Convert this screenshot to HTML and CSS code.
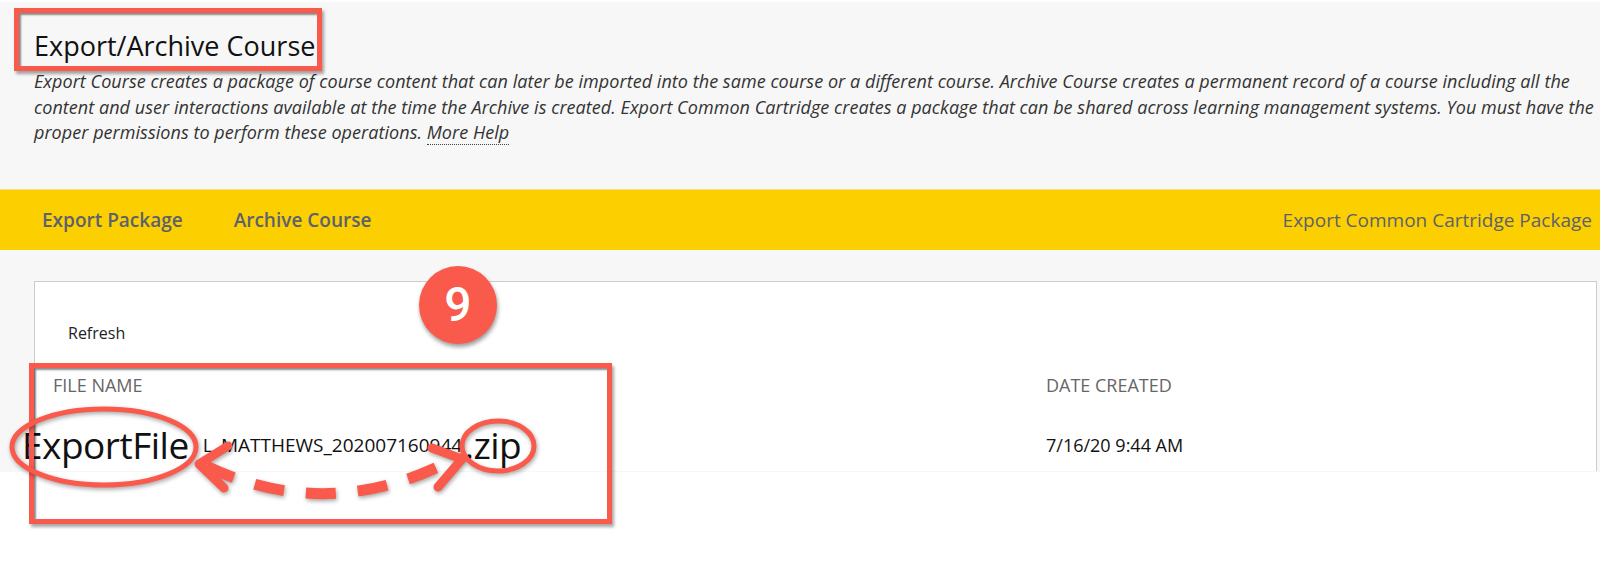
FILE: index.html
```html
<!DOCTYPE html>
<html lang="en">
<head>
<meta charset="utf-8">
<title>Export/Archive Course</title>
<link rel="stylesheet" href="styles.css">
</head>
<body>
<div class="screen">
  <header class="page-head">
    <h1 class="title">Export/Archive Course</h1>
    <p class="desc">Export Course creates a package of course content that can later be imported into the same course or a different course. Archive Course creates a permanent record of a course including all the<br>content and user interactions available at the time the Archive is created. Export Common Cartridge creates a package that can be shared across learning management systems. You must have the<br>proper permissions to perform these operations. <a class="help" href="#">More Help</a></p>
    <div class="mark-title"></div>
  </header>

  <nav class="tabs">
    <a class="tab strong" href="#">Export Package</a>
    <a class="tab strong" href="#">Archive Course</a>
    <a class="tab right" href="#">Export Common Cartridge Package</a>
  </nav>

  <section class="box">
    <div class="refresh">Refresh</div>
    <div class="table">
      <div class="th">FILE NAME</div>
      <div class="th">DATE CREATED</div>
      <div class="td name"><span class="big first">ExportFile</span><span class="small">L_MATTHEWS_202007160944</span><span class="big ext">.zip</span></div>
      <div class="td">7/16/20 9:44 AM</div>
    </div>
    <div class="badge">9</div>
    <div class="mark-table"></div>
  </section>

  <svg class="arrows" width="640" height="210" viewBox="0 0 640 210" xmlns="http://www.w3.org/2000/svg">
    <g fill="none" stroke="#fa5a4b">
      <ellipse cx="104" cy="87" rx="92" ry="38" stroke-width="5"/>
      <ellipse cx="498" cy="86" rx="36" ry="25" stroke-width="5"/>
      <path d="M206 106 Q330 165 456 98" stroke-width="11" stroke-dasharray="30 22"/>
      <polyline points="228,86 199,104 224,128" stroke-width="9" stroke-linecap="round" stroke-linejoin="round"/>
      <polyline points="432,88 462,99 438,127" stroke-width="9" stroke-linecap="round" stroke-linejoin="round"/>
    </g>
  </svg>
</div>
</body>
</html>
```

FILE: styles.css
```css
* { box-sizing: border-box; }

html, body {
  margin: 0;
  padding: 0;
  background: #ffffff;
}

body {
  font-family: "Open Sans", "DejaVu Sans", sans-serif;
  color: #222;
  width: 1600px;
  height: 570px;
  overflow: hidden;
}

.screen {
  position: relative;
  height: 472px;
  background: #f7f7f7;
  border-top: 2px solid #ffffff;
}

.page-head {
  position: relative;
  padding: 28px 0 0 34px;
}

.title {
  margin: 0;
  font-size: 27px;
  font-weight: 400;
  line-height: 32px;
  color: #111;
}

.desc {
  margin: 7px 0 0 0;
  font-size: 18px;
  font-style: italic;
  line-height: 25.5px;
  letter-spacing: 0.05px;
  color: #333;
  white-space: nowrap;
}

.help {
  color: #333;
  text-decoration: none;
  border-bottom: 1px dotted #444;
}

.mark-title {
  position: absolute;
  left: 14px;
  top: 6px;
  width: 308px;
  height: 63px;
  border: 5px solid #fa5a4b;
  box-shadow: 2px 3px 3px rgba(0, 0, 0, 0.35), inset 2px 2px 2px rgba(0, 0, 0, 0.45);
}

.tabs {
  display: flex;
  align-items: center;
  gap: 51px;
  height: 61px;
  margin-top: 43px;
  padding: 0 8px 0 42px;
  background: #fccf00;
  border-top: 1px solid #f1de86;
}

.tab {
  font-size: 19px;
  color: #5c6170;
  text-decoration: none;
  line-height: 26px;
}

.tab.strong {
  font-weight: 600;
}

.tab.right {
  margin-left: auto;
}

.box {
  position: relative;
  margin: 31px 3px 0 34px;
  height: 190px;
  background: #ffffff;
  border: 1px solid #cccccc;
  border-bottom: none;
  padding: 40px 0 0 33px;
}

.refresh {
  font-size: 16px;
  line-height: 22px;
  color: #222;
}

.table {
  display: grid;
  grid-template-columns: 993px 1fr;
  margin: 29px 0 0 -15px;
  align-items: center;
}

.th {
  font-size: 18px;
  line-height: 24px;
  color: #666;
}

.td {
  font-size: 18px;
  color: #111;
  height: 46px;
  margin-top: 25px;
  display: flex;
  align-items: center;
}

.big {
  font-size: 37px;
  line-height: 46px;
  color: #111;
  letter-spacing: -0.5px;
}

.big.first {
  margin-left: -31px;
  margin-right: 14px;
}

.big.ext {
  margin-left: 2px;
}

.small {
  font-size: 19px;
}

.badge {
  position: absolute;
  left: 384px;
  top: -16px;
  width: 78px;
  height: 78px;
  border-radius: 50%;
  background: #fa5a4b;
  color: #ffffff;
  font-family: Roboto, "Liberation Sans", sans-serif;
  font-weight: 500;
  font-size: 48px;
  line-height: 78px;
  text-align: center;
  box-shadow: 1px 3px 4px rgba(0, 0, 0, 0.4);
}

.mark-table {
  position: absolute;
  left: -6px;
  top: 81px;
  width: 583px;
  height: 161px;
  border: 5px solid #fa5a4b;
  box-shadow: 2px 3px 3px rgba(0, 0, 0, 0.35), inset 2px 2px 2px rgba(0, 0, 0, 0.45);
}

.arrows {
  position: absolute;
  left: 0;
  top: 358px;
  filter: drop-shadow(1px 2px 2px rgba(0, 0, 0, 0.35));
}
```
